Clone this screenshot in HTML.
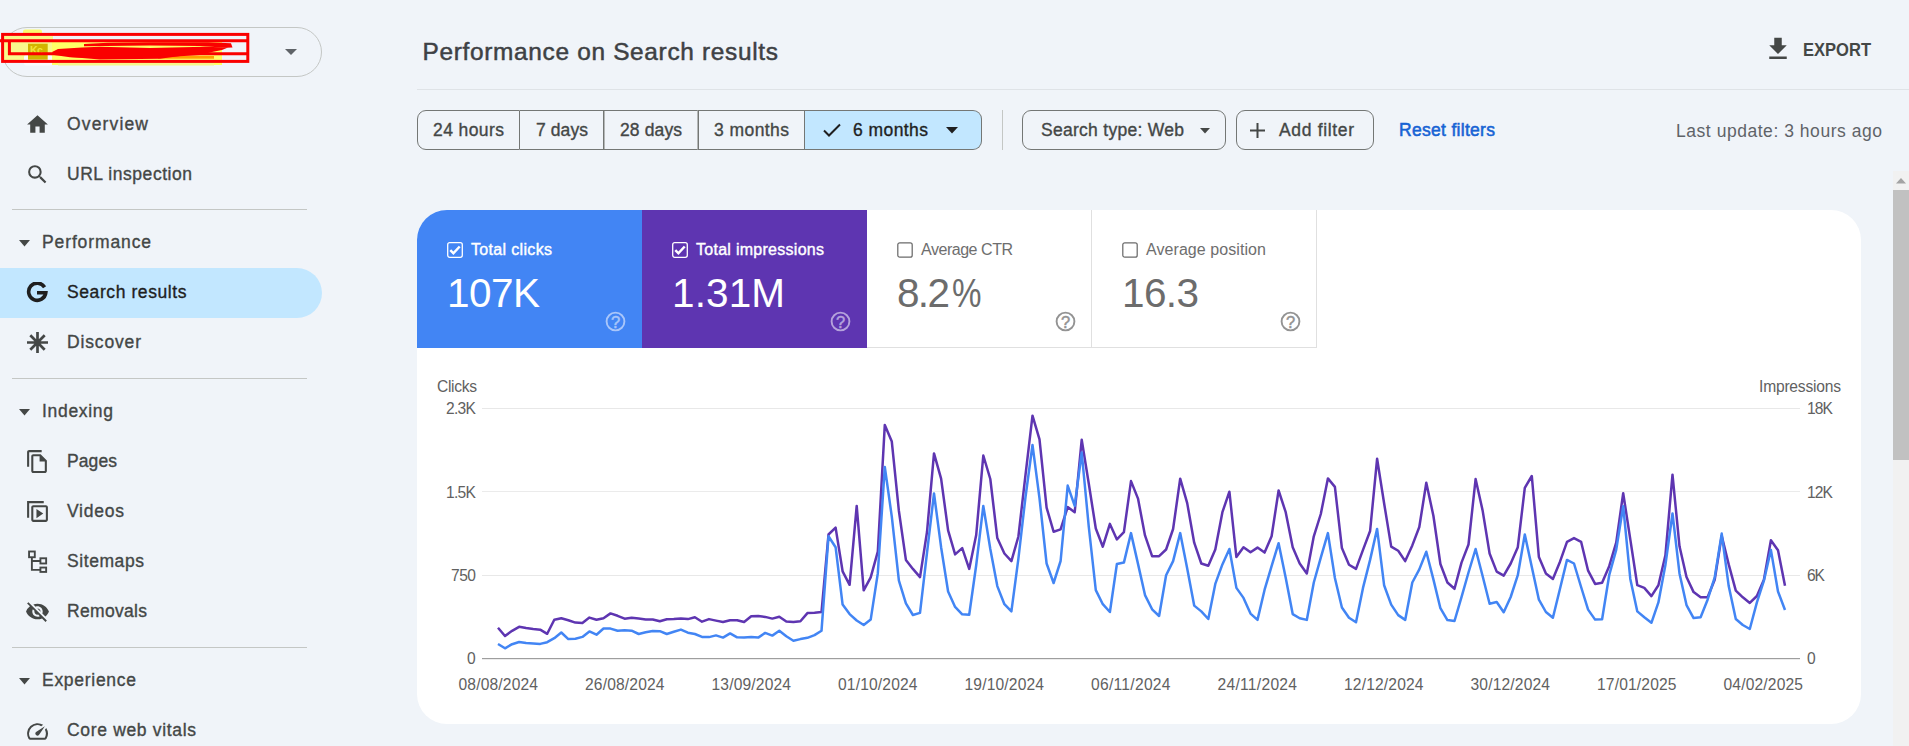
<!DOCTYPE html>
<html lang="en">
<head>
<meta charset="utf-8">
<title>Performance on Search results</title>
<style>
html,body{margin:0;padding:0}
body{width:1909px;height:746px;overflow:hidden;background:#f0f4f9;position:relative;font-family:"Liberation Sans",Arial,sans-serif;-webkit-font-smoothing:antialiased}
.abs{position:absolute}
.t{position:absolute;white-space:nowrap;display:block}
.hr{position:absolute;height:1px;background:#c4c7c5}
.ic{position:absolute}
.seg{position:absolute;top:110px;height:38px;border:1px solid #747775;border-left:none;background:#f0f4f9}
.chip{position:absolute;top:110px;height:38px;border:1px solid #747775;border-radius:9px}
.tile{position:absolute;top:210px;height:138px;width:225px;box-sizing:border-box}
.cb{position:absolute;width:12px;height:12px;border-radius:2px}
</style>
</head>
<body>

<!-- ============ SIDEBAR ============ -->
<div class="abs" id="prop" style="left:2px;top:27px;width:318px;height:48px;border:1px solid #c4c7c5;border-radius:25px"></div>
<!-- redaction scribble over property name -->
<svg class="abs" style="left:0;top:26px" width="260" height="44" viewBox="0 26 260 44">
  <rect x="23" y="29.500" width="19" height="6" rx="2" fill="#fbfb6e"/>
  <rect x="4" y="36" width="49" height="24.500" fill="#f9f98c"/>
  <rect x="24" y="55" width="28.500" height="10.500" rx="2" fill="#fbfbfb"/>
  <rect x="52" y="41" width="170" height="24" fill="#ffff66"/>
  <rect x="58" y="62" width="156" height="3.500" fill="#f6f68a"/>
  <rect x="28" y="43.700" width="19.700" height="16" fill="#d2b400"/>
  <text x="30" y="54" font-family="Liberation Sans, sans-serif" font-weight="700" font-size="10.500" fill="#f2e23c" letter-spacing="-.500">Kc</text>
  <rect x="158" y="56" width="56" height="2.700" fill="#ffa000"/>
  <rect x="2.600" y="34.400" width="245.200" height="27" fill="none" stroke="#fa0000" stroke-width="3"/>
  <path d="M0 40.800H247.800M9.400 40.800V53.800H247.800" fill="none" stroke="#fa0000" stroke-width="3"/>
  <path d="M52 52 L58 49 L82 47.500 L100 46.800 L150 48 L205 46.800 L228 47.400 L222 50 L212 52 L200 55 L160 57.500 L100 58 L70 57.300 L54 55 Z" fill="#fa0000"/>
  <path d="M84 44 L108 42.800 L150 42.300 L208 42.300 L231 43.200 L232.500 47.500 L226 47.800 L200 46 L150 45.600 L84 46.300 Z" fill="#fa0000"/>
  <path d="M70 57 L150 53 L180 56 L160 58.800 L100 59.500 Z" fill="#fa0000"/>
</svg>
<svg class="ic" style="left:284px;top:48px" width="14" height="8" viewBox="0 0 14 8"><path d="M1 1h12L7 7z" fill="#5f6368"/></svg>

<div class="abs" id="sel" style="left:0;top:268px;width:322px;height:50px;background:#c2e7ff;border-radius:0 25px 25px 0"></div>

<div class="hr" style="left:12px;top:209px;width:295px"></div>
<div class="hr" style="left:12px;top:378px;width:295px"></div>
<div class="hr" style="left:12px;top:647px;width:295px"></div>

<!-- section carets -->
<svg class="ic" style="left:19px;top:240px" width="11" height="6.600" viewBox="0 0 10 5" preserveAspectRatio="none"><path d="M0 0h10L5 5z" fill="#444746"/></svg>
<svg class="ic" style="left:19px;top:409px" width="11" height="6.600" viewBox="0 0 10 5" preserveAspectRatio="none"><path d="M0 0h10L5 5z" fill="#444746"/></svg>
<svg class="ic" style="left:19px;top:678px" width="11" height="6.600" viewBox="0 0 10 5" preserveAspectRatio="none"><path d="M0 0h10L5 5z" fill="#444746"/></svg>

<!-- nav icons -->
<svg class="ic" id="i-home" style="left:24.8px;top:112px" width="25" height="25" viewBox="0 0 24 24"><path fill="#444746" d="M10 20v-6h4v6h5v-8h3L12 3 2 12h3v8z"/></svg>
<svg class="ic" id="i-search" style="left:24.8px;top:162.4px" width="25" height="25" viewBox="0 0 24 24"><path fill="#444746" d="M15.500 14h-.79l-.28-.27A6.471 6.471 0 0 0 16 9.500 6.500 6.500 0 1 0 9.500 16c1.610 0 3.090-.59 4.230-1.570l.27.28v.79l5 4.990L20.490 19l-4.990-5zm-6 0C7.010 14 5 11.990 5 9.500S7.010 5 9.500 5 14 7.010 14 9.500 11.990 14 9.500 14z"/></svg>
<svg class="ic" id="i-g" style="left:26.2px;top:282.3px" width="22" height="21" viewBox="0 0 22 21"><path fill="none" stroke="#1f1f1f" stroke-width="3.600" d="M18.600 5.200A8.600 8.600 0 1 0 19.800 10.700H11"/></svg>
<svg class="ic" id="i-disc" style="left:27.3px;top:332px" width="21" height="21" viewBox="-10.500 -10.500 21 21"><g stroke="#444746" stroke-width="2.700"><path d="M0-10.500V10.500M-10.500 0H10.500M-7.200-7.200L7.200 7.200M-7.200 7.200L7.200-7.200"/></g></svg>
<svg class="ic" id="i-pages" style="left:24.8px;top:449px" width="25" height="25" viewBox="0 0 24 24"><path fill="#444746" d="M16 1H4c-1.100 0-2 .9-2 2v14h2V3h12V1zm-1 4H8c-1.100 0-1.990.9-1.990 2L6 21c0 1.100.89 2 1.990 2H19c1.100 0 2-.9 2-2V11l-6-6zM8 21V7h6v5h5v9H8z"/></svg>
<svg class="ic" id="i-videos" style="left:24.8px;top:499px" width="25" height="25" viewBox="0 0 24 24"><path fill="#444746" d="M2 2h16v2H4v14H2zM8 6h12c1.100 0 2 .9 2 2v12c0 1.100-.9 2-2 2H8c-1.100 0-2-.9-2-2V8c0-1.100.9-2 2-2zm0 2v12h12V8zm3 1.500v9l6.500-4.500z" fill-rule="evenodd"/></svg>
<svg class="ic" id="i-sitemaps" style="left:24.8px;top:549px" width="25" height="25" viewBox="0 0 24 24"><g fill="none" stroke="#444746" stroke-width="1.800"><rect x="3.900" y="2.400" width="5.500" height="5.500"/><rect x="14.800" y="8.900" width="5.500" height="5"/><rect x="14.800" y="17.800" width="5.500" height="4.200"/><path d="M6.600 7.900V20H14.800M6.600 11.500H14.800"/></g></svg>
<svg class="ic" id="i-removals" style="left:24.8px;top:599px" width="25" height="25" viewBox="0 0 24 24"><path fill="#444746" d="M12 7c2.760 0 5 2.240 5 5 0 .65-.13 1.260-.36 1.830l2.920 2.920c1.510-1.260 2.700-2.890 3.430-4.750-1.730-4.390-6-7.500-11-7.500-1.400 0-2.740.25-3.980.7l2.160 2.160C10.740 7.130 11.350 7 12 7zM2 4.270l2.280 2.280.46.460A11.804 11.804 0 0 0 1 12c1.730 4.390 6 7.500 11 7.500 1.550 0 3.030-.3 4.380-.84l.42.42L19.730 22 21 20.730 3.270 3 2 4.270zM7.530 9.800l1.550 1.550c-.05.210-.08.430-.08.650 0 1.660 1.340 3 3 3 .22 0 .44-.03.650-.08l1.550 1.550c-.67.330-1.410.53-2.200.53-2.760 0-5-2.240-5-5 0-.79.200-1.530.53-2.200zm4.310-.78l3.150 3.150.02-.16c0-1.660-1.340-3-3-3l-.17.010z"/></svg>
<svg class="ic" id="i-cwv" style="left:24.8px;top:719px" width="25" height="25" viewBox="0 0 24 24"><path fill="#444746" d="M20.380 8.570l-1.230 1.850a8 8 0 0 1-.22 7.580H5.070A8 8 0 0 1 15.580 6.850l1.850-1.230A10 10 0 0 0 3.350 19a2 2 0 0 0 1.720 1h13.850a2 2 0 0 0 1.740-1 10 10 0 0 0-.27-10.440zm-9.790 6.840a2 2 0 0 0 2.830 0l5.660-8.490-8.490 5.660a2 2 0 0 0 0 2.830z"/></svg>

<!-- ============ HEADER ============ -->
<div class="abs" style="left:417px;top:89px;width:1492px;height:1px;background:#dfe3e7"></div>
<svg class="ic" id="i-dl" style="left:1763px;top:34px" width="30" height="30" viewBox="0 0 24 24"><path fill="#444746" d="M19 9h-4V3H9v6H5l7 7 7-7zM5 18v2h14v-2H5z"/></svg>

<!-- ============ FILTER BAR ============ -->
<div class="seg" style="left:417px;width:101px;border-left:1px solid #747775;border-radius:9px 0 0 9px"></div>
<div class="seg" style="left:520px;width:83px"></div>
<div class="abs" style="left:604px;top:110px;width:1px;height:40px;background:linear-gradient(#747775,#747775) top/1px 1px no-repeat,linear-gradient(#747775,#747775) bottom/1px 1px no-repeat,#b4b7b7"></div>
<div class="seg" style="left:605px;width:92px;border-right-color:#b4b7b7"></div>
<div class="abs" style="left:698px;top:110px;width:1px;height:40px;background:#747775"></div>
<div class="seg" style="left:699px;width:105px"></div>
<div class="seg" style="left:805px;width:176px;background:#c2e7ff;border-radius:0 9px 9px 0"></div>
<svg class="ic" style="left:822px;top:121px" width="20" height="18" viewBox="0 0 20 18"><path d="M2 9.500l5 5L18 3.500" fill="none" stroke="#1f1f1f" stroke-width="2"/></svg>
<svg class="ic" style="left:946px;top:127px" width="12" height="7" viewBox="0 0 12 7"><path d="M0 0h12L6 6.500z" fill="#1f1f1f"/></svg>
<div class="abs" style="left:1002px;top:110px;width:1px;height:40px;background:#c4c7c5"></div>
<div class="chip" style="left:1022px;width:202px"></div>
<svg class="ic" style="left:1200px;top:128px" width="10" height="6" viewBox="0 0 10 6"><path d="M0 0h10L5 5.500z" fill="#444746"/></svg>
<div class="chip" style="left:1236px;width:136px"></div>
<svg class="ic" style="left:1249px;top:122px" width="17" height="17" viewBox="0 0 17 17"><path d="M8.500 1v15M1 8.500h15" stroke="#444746" stroke-width="2"/></svg>

<!-- ============ SCROLLBAR ============ -->
<div class="abs" style="left:1893px;top:171px;width:16px;height:575px;background:#f1f1f1"></div>
<div class="abs" style="left:1893px;top:190px;width:16px;height:270px;background:#c1c1c1"></div>
<svg class="ic" style="left:1896px;top:178px" width="10" height="6" viewBox="0 0 10 6"><path d="M0 5.500h10L5 0z" fill="#a3a3a3"/></svg>

<!-- ============ CARD ============ -->
<div class="abs" id="card" style="left:417px;top:210px;width:1444px;height:514px;background:#fff;border-radius:30px"></div>
<div class="tile" style="left:417px;background:#4285f4;border-radius:30px 0 0 0"></div>
<div class="tile" style="left:642px;background:#5e35b1"></div>
<div class="tile" style="left:867px;border-right:1px solid #e0e0e0;border-bottom:1px solid #e0e0e0"></div>
<div class="tile" style="left:1092px;border-right:1px solid #e0e0e0;border-bottom:1px solid #e0e0e0"></div>

<!-- checkboxes -->
<svg class="ic" style="left:447px;top:242px" width="16" height="16" viewBox="0 0 16 16"><rect x=".700" y=".700" width="14.600" height="14.600" rx="2" fill="#4285f4" stroke="#fff" stroke-width="1.300"/><path d="M3.300 8.200l3.100 3.100 6.300-6.800" fill="none" stroke="#fff" stroke-width="2.500"/></svg>
<svg class="ic" style="left:672px;top:242px" width="16" height="16" viewBox="0 0 16 16"><rect x=".700" y=".700" width="14.600" height="14.600" rx="2" fill="#5e35b1" stroke="#fff" stroke-width="1.300"/><path d="M3.300 8.200l3.100 3.100 6.300-6.800" fill="none" stroke="#fff" stroke-width="2.500"/></svg>
<svg class="ic" style="left:897px;top:242px" width="16" height="16" viewBox="0 0 16 16"><rect x=".800" y=".800" width="14.400" height="14.400" rx="2" fill="#fff" stroke="#6b6b6b" stroke-width="1.250"/></svg>
<svg class="ic" style="left:1122px;top:242px" width="16" height="16" viewBox="0 0 16 16"><rect x=".800" y=".800" width="14.400" height="14.400" rx="2" fill="#fff" stroke="#6b6b6b" stroke-width="1.250"/></svg>

<!-- help icons -->
<svg class="ic" style="left:605.4px;top:311.300px" width="21" height="21" viewBox="0 0 21 21"><circle cx="10.500" cy="10.500" r="8.900" fill="none" stroke="#a9c6fa" stroke-width="1.900"/><text x="10.500" y="16.800" text-anchor="middle" font-family="Liberation Sans, sans-serif" font-weight="400" font-size="16.500" stroke="#a9c6fa" stroke-width=".500" fill="#a9c6fa">?</text></svg>
<svg class="ic" style="left:830.4px;top:311.300px" width="21" height="21" viewBox="0 0 21 21"><circle cx="10.500" cy="10.500" r="8.900" fill="none" stroke="#b5a3dc" stroke-width="1.900"/><text x="10.500" y="16.800" text-anchor="middle" font-family="Liberation Sans, sans-serif" font-weight="400" font-size="16.500" stroke="#b5a3dc" stroke-width=".500" fill="#b5a3dc">?</text></svg>
<svg class="ic" style="left:1055.4px;top:311.300px" width="21" height="21" viewBox="0 0 21 21"><circle cx="10.500" cy="10.500" r="8.900" fill="none" stroke="#939393" stroke-width="1.900"/><text x="10.500" y="16.800" text-anchor="middle" font-family="Liberation Sans, sans-serif" font-weight="400" font-size="16.500" stroke="#939393" stroke-width=".500" fill="#939393">?</text></svg>
<svg class="ic" style="left:1280.4px;top:311.300px" width="21" height="21" viewBox="0 0 21 21"><circle cx="10.500" cy="10.500" r="8.900" fill="none" stroke="#939393" stroke-width="1.900"/><text x="10.500" y="16.800" text-anchor="middle" font-family="Liberation Sans, sans-serif" font-weight="400" font-size="16.500" stroke="#939393" stroke-width=".500" fill="#939393">?</text></svg>

<!-- ============ CHART ============ -->
<svg class="abs" id="chart" style="left:0;top:0" width="1909" height="746" viewBox="0 0 1909 746">
  <g fill="#e8e8e8">
    <rect x="482" y="408" width="1318" height="1"/>
    <rect x="482" y="491" width="1318" height="1" opacity=".85"/>
    <rect x="482" y="575" width="1318" height="1"/>
  </g>
  <rect x="482" y="658" width="1318" height="1.200" fill="#9e9e9e"/>
  <polyline fill="none" stroke="#5e35b1" stroke-width="2.500" stroke-linejoin="round" points="498.0,627.7 505.0,636.0 512.1,630.8 519.1,626.8 526.1,628.1 533.2,629.0 540.2,629.7 547.2,633.8 554.3,619.8 561.3,618.2 568.3,620.2 575.4,622.6 582.4,623.0 589.4,617.6 596.5,619.8 603.5,618.2 610.5,613.4 617.6,615.8 624.6,618.7 631.6,617.8 638.7,618.6 645.7,619.5 652.7,619.5 659.8,621.3 666.8,619.3 673.8,619.1 680.9,618.6 687.9,619.1 694.9,617.3 702.0,621.7 709.0,619.1 716.0,620.6 723.0,622.0 730.1,620.2 737.1,620.2 744.1,622.0 751.2,616.2 758.2,616.0 765.2,616.9 772.3,618.6 779.3,616.7 786.3,621.5 793.4,622.0 800.4,621.3 807.4,613.1 814.5,612.7 821.5,612.1 828.5,534.5 835.6,527.6 842.6,571.3 849.6,584.8 856.7,505.9 863.7,590.3 870.7,577.4 877.8,551.7 884.8,424.9 891.8,441.6 898.9,511.0 905.9,559.9 912.9,568.9 920.0,577.1 927.0,532.0 934.0,453.4 941.1,478.7 948.1,530.3 955.1,554.4 962.2,548.1 969.2,568.9 976.2,535.0 983.3,455.5 990.3,479.0 997.3,538.1 1004.4,553.5 1011.4,561.1 1018.4,536.5 1025.5,474.8 1032.5,415.7 1039.5,439.4 1046.6,507.7 1053.6,531.7 1060.6,529.4 1067.7,507.1 1074.7,512.2 1081.7,439.8 1088.8,483.8 1095.8,528.5 1102.8,546.7 1109.9,523.9 1116.9,539.4 1123.9,532.2 1131.0,481.1 1138.0,498.6 1145.0,535.4 1152.1,556.2 1159.1,556.2 1166.1,549.5 1173.1,529.0 1180.2,478.7 1187.2,503.1 1194.2,542.7 1201.3,563.5 1208.3,565.8 1215.3,549.5 1222.4,512.2 1229.4,491.7 1236.4,557.1 1243.5,547.2 1250.5,552.3 1257.5,547.6 1264.6,552.6 1271.6,536.3 1278.6,490.5 1285.7,512.2 1292.7,547.2 1299.7,563.5 1306.8,573.4 1313.8,536.3 1320.8,514.0 1327.9,478.4 1334.9,486.9 1341.9,548.1 1349.0,564.7 1356.0,568.9 1363.0,549.9 1370.1,531.0 1377.1,458.8 1384.1,503.2 1391.2,546.6 1398.2,550.8 1405.2,561.1 1412.3,545.4 1419.3,527.0 1426.3,482.7 1433.4,515.8 1440.4,564.0 1447.4,582.5 1454.5,588.8 1461.5,562.6 1468.5,544.5 1475.6,479.1 1482.6,510.4 1489.6,553.5 1496.7,571.6 1503.7,575.6 1510.7,563.5 1517.8,547.2 1524.8,487.8 1531.8,476.0 1538.9,557.1 1545.9,573.4 1552.9,578.9 1560.0,561.7 1567.0,541.8 1574.0,538.1 1581.1,541.8 1588.1,570.7 1595.1,583.9 1602.1,582.8 1609.2,566.2 1616.2,542.7 1623.2,493.2 1630.3,539.4 1637.3,585.2 1644.3,587.9 1651.4,596.1 1658.4,585.2 1665.4,555.3 1672.5,474.7 1679.5,546.3 1686.5,577.0 1693.6,592.1 1700.6,597.3 1707.6,597.3 1714.7,579.8 1721.7,535.9 1728.7,564.4 1735.8,590.6 1742.8,597.3 1749.8,602.9 1756.9,596.0 1763.9,579.8 1770.9,540.3 1778.0,550.3 1785.0,585.7"/>
  <polyline fill="none" stroke="#4285f4" stroke-width="2.500" stroke-linejoin="round" points="498.0,644.0 505.0,648.3 512.1,644.2 519.1,642.0 526.1,643.1 533.2,643.5 540.2,643.9 547.2,642.2 554.3,638.2 561.3,632.5 568.3,639.1 575.4,638.7 582.4,636.9 589.4,631.4 596.5,634.7 603.5,628.5 610.5,628.6 617.6,630.8 624.6,630.3 631.6,630.7 638.7,634.0 645.7,632.3 652.7,631.0 659.8,631.2 666.8,634.0 673.8,631.8 680.9,629.6 687.9,632.7 694.9,634.0 702.0,636.9 709.0,637.1 716.0,635.4 723.0,637.6 730.1,633.4 737.1,637.3 744.1,637.6 751.2,636.9 758.2,637.6 765.2,632.9 772.3,635.6 779.3,630.8 786.3,636.3 793.4,640.7 800.4,639.1 807.4,637.8 814.5,635.1 821.5,630.8 828.5,536.3 835.6,547.2 842.6,604.6 849.6,614.1 856.7,620.5 863.7,625.0 870.7,619.6 877.8,573.4 884.8,466.9 891.8,516.7 898.9,580.7 905.9,603.3 912.9,615.0 920.0,612.9 927.0,552.8 934.0,493.5 941.1,547.2 948.1,591.5 955.1,606.9 962.2,614.3 969.2,614.7 976.2,565.3 983.3,505.9 990.3,549.0 997.3,586.1 1004.4,604.2 1011.4,611.4 1018.4,558.6 1025.5,497.0 1032.5,444.9 1039.5,498.3 1046.6,563.5 1053.6,583.0 1060.6,561.0 1067.7,485.6 1074.7,505.9 1081.7,452.5 1088.8,527.0 1095.8,590.1 1102.8,604.2 1109.9,612.0 1116.9,564.0 1123.9,562.6 1131.0,533.1 1138.0,563.9 1145.0,595.1 1152.1,609.3 1159.1,616.0 1166.1,575.2 1173.1,561.1 1180.2,533.1 1187.2,568.4 1194.2,605.6 1201.3,611.4 1208.3,619.0 1215.3,583.9 1222.4,564.4 1229.4,549.0 1236.4,587.9 1243.5,597.9 1250.5,613.6 1257.5,619.9 1264.6,589.7 1271.6,566.2 1278.6,543.2 1285.7,577.8 1292.7,614.1 1299.7,618.3 1306.8,619.9 1313.8,582.5 1320.8,557.7 1327.9,533.1 1334.9,578.0 1341.9,607.5 1349.0,617.8 1356.0,622.3 1363.0,587.9 1370.1,559.9 1377.1,528.9 1384.1,585.2 1391.2,604.6 1398.2,615.1 1405.2,619.9 1412.3,582.5 1419.3,569.4 1426.3,551.7 1433.4,579.4 1440.4,608.2 1447.4,620.1 1454.5,621.0 1461.5,597.1 1468.5,572.5 1475.6,549.0 1482.6,576.0 1489.6,603.8 1496.7,602.0 1503.7,612.3 1510.7,597.0 1517.8,575.2 1524.8,534.5 1531.8,567.1 1538.9,599.7 1545.9,612.0 1552.9,617.8 1560.0,588.8 1567.0,559.9 1574.0,563.5 1581.1,587.0 1588.1,609.6 1595.1,619.6 1602.1,619.2 1609.2,575.2 1616.2,549.9 1623.2,506.2 1630.3,578.9 1637.3,611.4 1644.3,617.2 1651.4,622.8 1658.4,602.4 1665.4,565.0 1672.5,513.5 1679.5,573.4 1686.5,605.1 1693.6,618.1 1700.6,617.2 1707.6,599.7 1714.7,577.4 1721.7,533.6 1728.7,586.1 1735.8,619.0 1742.8,625.0 1749.8,629.0 1756.9,602.4 1763.9,580.7 1770.9,549.9 1778.0,591.5 1785.0,610.0"/>
</svg>

<!-- ============ TEXT ============ -->
<span class="t" id="t0" style="left:67px;top:112.0px;height:24px;line-height:24px;font-size:17.5px;color:#444746;font-weight:400;letter-spacing:1.152px;-webkit-text-stroke:0.35px #444746">Overview</span>
<span class="t" id="t1" style="left:67px;top:162.0px;height:24px;line-height:24px;font-size:17.5px;color:#444746;font-weight:400;letter-spacing:0.536px;-webkit-text-stroke:0.35px #444746">URL inspection</span>
<span class="t" id="t2" style="left:42px;top:230.0px;height:24px;line-height:24px;font-size:17.5px;color:#444746;font-weight:400;letter-spacing:0.881px;-webkit-text-stroke:0.35px #444746">Performance</span>
<span class="t" id="t3" style="left:67px;top:280.0px;height:24px;line-height:24px;font-size:17.5px;color:#1f1f1f;font-weight:400;letter-spacing:0.588px;-webkit-text-stroke:0.35px #1f1f1f">Search results</span>
<span class="t" id="t4" style="left:67px;top:330.0px;height:24px;line-height:24px;font-size:17.5px;color:#444746;font-weight:400;letter-spacing:0.846px;-webkit-text-stroke:0.35px #444746">Discover</span>
<span class="t" id="t5" style="left:42px;top:399.0px;height:24px;line-height:24px;font-size:17.5px;color:#444746;font-weight:400;letter-spacing:0.690px;-webkit-text-stroke:0.35px #444746">Indexing</span>
<span class="t" id="t6" style="left:67px;top:449.0px;height:24px;line-height:24px;font-size:17.5px;color:#444746;font-weight:400;letter-spacing:0.094px;-webkit-text-stroke:0.35px #444746">Pages</span>
<span class="t" id="t7" style="left:67px;top:499.0px;height:24px;line-height:24px;font-size:17.5px;color:#444746;font-weight:400;letter-spacing:0.759px;-webkit-text-stroke:0.35px #444746">Videos</span>
<span class="t" id="t8" style="left:67px;top:549.0px;height:24px;line-height:24px;font-size:17.5px;color:#444746;font-weight:400;letter-spacing:0.578px;-webkit-text-stroke:0.35px #444746">Sitemaps</span>
<span class="t" id="t9" style="left:67px;top:599.0px;height:24px;line-height:24px;font-size:17.5px;color:#444746;font-weight:400;letter-spacing:0.312px;-webkit-text-stroke:0.35px #444746">Removals</span>
<span class="t" id="t10" style="left:42px;top:668.0px;height:24px;line-height:24px;font-size:17.5px;color:#444746;font-weight:400;letter-spacing:0.715px;-webkit-text-stroke:0.35px #444746">Experience</span>
<span class="t" id="t11" style="left:67px;top:718.0px;height:24px;line-height:24px;font-size:17.5px;color:#444746;font-weight:400;letter-spacing:0.669px;-webkit-text-stroke:0.35px #444746">Core web vitals</span>
<span class="t" id="t12" style="left:422.5px;top:35.0px;height:34px;line-height:34px;font-size:24.4px;color:#3e4144;font-weight:400;letter-spacing:0.689px;-webkit-text-stroke:0.5px #3e4144">Performance on Search results</span>
<span class="t" id="t13" style="left:1803px;top:36.5px;height:26px;line-height:26px;font-size:18.6px;color:#444746;font-weight:700;letter-spacing:0.000px;transform:scaleX(0.8893);transform-origin:0 50%">EXPORT</span>
<span class="t" id="t14" style="left:433px;top:118.0px;height:24px;line-height:24px;font-size:17.5px;color:#444746;font-weight:400;letter-spacing:0.413px;-webkit-text-stroke:0.35px #444746">24 hours</span>
<span class="t" id="t15" style="left:536px;top:118.0px;height:24px;line-height:24px;font-size:17.5px;color:#444746;font-weight:400;letter-spacing:0.087px;-webkit-text-stroke:0.35px #444746">7 days</span>
<span class="t" id="t16" style="left:620px;top:118.0px;height:24px;line-height:24px;font-size:17.5px;color:#444746;font-weight:400;letter-spacing:0.117px;-webkit-text-stroke:0.35px #444746">28 days</span>
<span class="t" id="t17" style="left:714px;top:118.0px;height:24px;line-height:24px;font-size:17.5px;color:#444746;font-weight:400;letter-spacing:0.431px;-webkit-text-stroke:0.35px #444746">3 months</span>
<span class="t" id="t18" style="left:853px;top:118.0px;height:24px;line-height:24px;font-size:17.5px;color:#1f1f1f;font-weight:400;letter-spacing:0.431px;-webkit-text-stroke:0.35px #1f1f1f">6 months</span>
<span class="t" id="t19" style="left:1041px;top:118.0px;height:24px;line-height:24px;font-size:17.5px;color:#444746;font-weight:400;letter-spacing:0.281px;-webkit-text-stroke:0.35px #444746">Search type: Web</span>
<span class="t" id="t20" style="left:1279px;top:118.0px;height:24px;line-height:24px;font-size:17.5px;color:#444746;font-weight:400;letter-spacing:0.660px;-webkit-text-stroke:0.35px #444746">Add filter</span>
<span class="t" id="t21" style="left:1399px;top:118.0px;height:24px;line-height:24px;font-size:17.5px;color:#1763d4;font-weight:400;letter-spacing:0.301px;-webkit-text-stroke:0.55px #1763d4">Reset filters</span>
<span class="t" id="t22" style="left:1676px;top:119.0px;height:24px;line-height:24px;font-size:17.5px;color:#5f6368;font-weight:400;letter-spacing:0.538px">Last update: 3 hours ago</span>
<span class="t" id="t23" style="left:471px;top:238.5px;height:22px;line-height:22px;font-size:16px;color:#ffffff;font-weight:400;letter-spacing:0.331px;-webkit-text-stroke:0.4px #ffffff">Total clicks</span>
<span class="t" id="t24" style="left:447px;top:265.1px;height:57px;line-height:57px;font-size:40.5px;color:#ffffff;font-weight:400;letter-spacing:-0.531px">107K</span>
<span class="t" id="t25" style="left:696px;top:238.5px;height:22px;line-height:22px;font-size:16px;color:#ffffff;font-weight:400;letter-spacing:0.274px;-webkit-text-stroke:0.4px #ffffff">Total impressions</span>
<span class="t" id="t26" style="left:672px;top:265.1px;height:57px;line-height:57px;font-size:40.5px;color:#ffffff;font-weight:400;letter-spacing:0.109px">1.31M</span>
<span class="t" id="t27" style="left:921px;top:238.5px;height:22px;line-height:22px;font-size:16px;color:#6e6e6e;font-weight:400;letter-spacing:-0.464px">Average CTR</span>
<span class="t" id="t28" style="left:897px;top:265.1px;height:57px;line-height:57px;font-size:40.5px;color:#6c6c6c;font-weight:400;letter-spacing:-1.656px">8.2<span style="display:inline-block;letter-spacing:0;margin-left:3.7px;transform:scaleX(.819);transform-origin:0 50%">%</span></span>
<span class="t" id="t29" style="left:1146px;top:238.5px;height:22px;line-height:22px;font-size:16px;color:#6e6e6e;font-weight:400;letter-spacing:0.073px">Average position</span>
<span class="t" id="t30" style="left:1122px;top:265.1px;height:57px;line-height:57px;font-size:40.5px;color:#6c6c6c;font-weight:400;letter-spacing:-0.609px">16.3</span>
<span class="t" id="t31" style="left:437px;top:375.5px;height:22px;line-height:22px;font-size:15.6px;color:#616161;font-weight:400;letter-spacing:-0.319px">Clicks</span>
<span class="t" id="t32" style="left:1759px;top:375.5px;height:22px;line-height:22px;font-size:15.6px;color:#616161;font-weight:400;letter-spacing:-0.206px">Impressions</span>
<span class="t" id="t33" style="left:446px;top:398.0px;height:22px;line-height:22px;font-size:15.6px;color:#616161;font-weight:400;letter-spacing:-0.698px">2.3K</span>
<span class="t" id="t34" style="left:446px;top:481.5px;height:22px;line-height:22px;font-size:15.6px;color:#616161;font-weight:400;letter-spacing:-0.698px">1.5K</span>
<span class="t" id="t35" style="left:451px;top:565.0px;height:22px;line-height:22px;font-size:15.6px;color:#616161;font-weight:400;letter-spacing:-0.516px">750</span>
<span class="t" id="t36" style="left:467px;top:648.0px;height:22px;line-height:22px;font-size:15.6px;color:#616161;font-weight:400;letter-spacing:0.000px">0</span>
<span class="t" id="t37" style="left:1807px;top:398.0px;height:22px;line-height:22px;font-size:15.6px;color:#616161;font-weight:400;letter-spacing:-0.875px">18K</span>
<span class="t" id="t38" style="left:1807px;top:481.5px;height:22px;line-height:22px;font-size:15.6px;color:#616161;font-weight:400;letter-spacing:-0.875px">12K</span>
<span class="t" id="t39" style="left:1807px;top:565.0px;height:22px;line-height:22px;font-size:15.6px;color:#616161;font-weight:400;letter-spacing:-1.078px">6K</span>
<span class="t" id="t40" style="left:1807px;top:648.0px;height:22px;line-height:22px;font-size:15.6px;color:#616161;font-weight:400;letter-spacing:0.000px">0</span>
<span class="t" id="t41" style="left:458.5px;top:674.0px;height:22px;line-height:22px;font-size:15.6px;color:#616161;font-weight:400;letter-spacing:0.161px">08/08/2024</span>
<span class="t" id="t42" style="left:585.0px;top:674.0px;height:22px;line-height:22px;font-size:15.6px;color:#616161;font-weight:400;letter-spacing:0.161px">26/08/2024</span>
<span class="t" id="t43" style="left:711.5px;top:674.0px;height:22px;line-height:22px;font-size:15.6px;color:#616161;font-weight:400;letter-spacing:0.161px">13/09/2024</span>
<span class="t" id="t44" style="left:838.0px;top:674.0px;height:22px;line-height:22px;font-size:15.6px;color:#616161;font-weight:400;letter-spacing:0.161px">01/10/2024</span>
<span class="t" id="t45" style="left:964.5px;top:674.0px;height:22px;line-height:22px;font-size:15.6px;color:#616161;font-weight:400;letter-spacing:0.161px">19/10/2024</span>
<span class="t" id="t46" style="left:1091.0px;top:674.0px;height:22px;line-height:22px;font-size:15.6px;color:#616161;font-weight:400;letter-spacing:0.290px">06/11/2024</span>
<span class="t" id="t47" style="left:1217.5px;top:674.0px;height:22px;line-height:22px;font-size:15.6px;color:#616161;font-weight:400;letter-spacing:0.290px">24/11/2024</span>
<span class="t" id="t48" style="left:1344.0px;top:674.0px;height:22px;line-height:22px;font-size:15.6px;color:#616161;font-weight:400;letter-spacing:0.161px">12/12/2024</span>
<span class="t" id="t49" style="left:1470.5px;top:674.0px;height:22px;line-height:22px;font-size:15.6px;color:#616161;font-weight:400;letter-spacing:0.161px">30/12/2024</span>
<span class="t" id="t50" style="left:1597.0px;top:674.0px;height:22px;line-height:22px;font-size:15.6px;color:#616161;font-weight:400;letter-spacing:0.161px">17/01/2025</span>
<span class="t" id="t51" style="left:1723.5px;top:674.0px;height:22px;line-height:22px;font-size:15.6px;color:#616161;font-weight:400;letter-spacing:0.161px">04/02/2025</span>

</body>
</html>
